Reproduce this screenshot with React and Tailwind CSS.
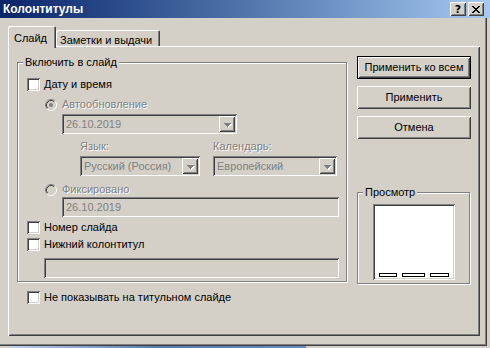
import React from 'react';

// Win2k classic 3D borders, painted as inset shadows so they take no layout room
const raised = 'shadow-[inset_1px_1px_0_#fff,inset_-1px_-1px_0_#404040,inset_2px_2px_0_#d4d0c8,inset_-2px_-2px_0_#808080]';
const defaultRaised = 'shadow-[inset_0_0_0_1px_#000,inset_2px_2px_0_#fff,inset_-2px_-2px_0_#404040,inset_3px_3px_0_#d4d0c8,inset_-3px_-3px_0_#808080]';
const sunken = 'shadow-[inset_1px_1px_0_#808080,inset_-1px_-1px_0_#fff,inset_2px_2px_0_#404040,inset_-2px_-2px_0_#d4d0c8]';
const disabledText = 'text-[#808080] [text-shadow:1px_1px_0_#fff]';

const Checkbox = ({ label, className = '' }) => (
    <div className={`flex items-center gap-[4px] h-[13px] ${className}`}>
        <div className={`w-[13px] h-[13px] bg-white shrink-0 ${sunken}`}></div>
        <span className="leading-[13px] whitespace-nowrap">{label}</span>
    </div>
);

const Radio = ({ label, checked, className = '' }) => (
    <div className={`flex items-center gap-[5px] h-[13px] ${className}`}>
        <svg width="12" height="12" viewBox="0 0 12 12" className="shrink-0">
            <circle cx="6" cy="6" r="5" fill="#d4d0c8" />
            <path d="M2.11 9.89 A5.5 5.5 0 0 1 9.89 2.11" fill="none" stroke="#808080" strokeWidth="1" />
            <path d="M9.89 2.11 A5.5 5.5 0 0 1 2.11 9.89" fill="none" stroke="#fff" strokeWidth="1" />
            <path d="M2.82 9.18 A4.5 4.5 0 0 1 9.18 2.82" fill="none" stroke="#404040" strokeWidth="1" />
            <path d="M9.18 2.82 A4.5 4.5 0 0 1 2.82 9.18" fill="none" stroke="#d4d0c8" strokeWidth="1" />
            {checked && <circle cx="6" cy="6" r="2" fill="#808080" />}
        </svg>
        <span className={`leading-[13px] whitespace-nowrap ${disabledText}`}>{label}</span>
    </div>
);

const DropArrow = () => (
    <div className={`w-[16px] h-[16px] shrink-0 bg-[#d4d0c8] ${raised}`}>
        <svg width="16" height="16" viewBox="0 0 16 16" shapeRendering="crispEdges">
            <g fill="#fff">
                <rect x="6" y="8" width="7" height="1" />
                <rect x="7" y="9" width="5" height="1" />
                <rect x="8" y="10" width="3" height="1" />
                <rect x="9" y="11" width="1" height="1" />
            </g>
            <g fill="#808080">
                <rect x="5" y="7" width="7" height="1" />
                <rect x="6" y="8" width="5" height="1" />
                <rect x="7" y="9" width="3" height="1" />
                <rect x="8" y="10" width="1" height="1" />
            </g>
        </svg>
    </div>
);

const Combo = ({ value, className = '' }) => (
    <div className={`h-[20px] flex items-center justify-between pl-[4px] pr-[2px] bg-[#d4d0c8] ${sunken} ${className}`}>
        <span className="text-[#808080] leading-[13px] whitespace-nowrap">{value}</span>
        <DropArrow />
    </div>
);

const Field = ({ value, className = '' }) => (
    <div className={`h-[20px] flex items-center pl-[4px] bg-[#d4d0c8] ${sunken} ${className}`}>
        <span className="text-[#808080] leading-[13px]">{value}</span>
    </div>
);

const Button = ({ children, isDefault }) => (
    <button className={`w-[114px] h-[23px] bg-[#d4d0c8] text-black leading-[13px] whitespace-nowrap ${isDefault ? defaultRaised : raised}`}>
        {children}
    </button>
);

const App = () => {
    return (
        <div className="w-[490px] h-[348px] bg-[#d4d0c8] overflow-hidden font-['Liberation_Sans',Arial,sans-serif] text-[11px] text-black select-none">
            {/* Title bar */}
            <div className="h-[18px] bg-linear-to-r from-[#0a246a] to-[#a6caf0] flex items-center justify-between pl-[3px] pr-[6px]">
                <span className="text-white font-bold text-[12px] leading-[14px]">Колонтитулы</span>
                <div className="flex gap-[2px]">
                    <div className={`w-[16px] h-[14px] bg-[#d4d0c8] flex items-center justify-center ${raised}`}>
                        <span className="font-bold text-[11px] leading-[11px] font-['DejaVu_Sans',sans-serif]">?</span>
                    </div>
                    <div className={`w-[16px] h-[14px] bg-[#d4d0c8] flex items-center justify-center ${raised}`}>
                        <svg width="8" height="7" viewBox="0 0 8 7" shapeRendering="crispEdges">
                            <path d="M0 0h2v1h-2zM6 0h2v1h-2zM1 1h2v1h-2zM5 1h2v1h-2zM2 2h4v1h-4zM3 3h2v1h-2zM2 4h4v1h-4zM1 5h2v1h-2zM5 5h2v1h-2zM0 6h2v1h-2zM6 6h2v1h-2z" fill="#000" />
                        </svg>
                    </div>
                </div>
            </div>

            {/* Window body */}
            <div className="w-[487px] h-[328px] pt-[8px] pl-[8px] shadow-[inset_-1px_-1px_0_#404040,inset_-2px_-2px_0_#808080]">
                {/* Tabs */}
                <div className="flex items-end h-[20px]">
                    <div className="relative z-10 h-[22px] mb-[-2px] w-[48px] pl-[6px] pt-[4px] bg-[#d4d0c8] rounded-t-[2px] shadow-[inset_1px_1px_0_#fff,inset_-1px_0_0_#404040,inset_-2px_0_0_#808080]">
                        <span className="leading-[13px]">Слайд</span>
                    </div>
                    <div className="h-[16px] w-[104px] pl-[4px] pt-[2px] rounded-t-[2px] shadow-[inset_1px_1px_0_#fff,inset_-1px_0_0_#404040,inset_-2px_0_0_#808080]">
                        <span className="leading-[13px] whitespace-nowrap">Заметки и выдачи</span>
                    </div>
                </div>

                {/* Tab page */}
                <div className={`w-[472px] h-[290px] flex pl-[9px] pt-[10px] ${raised}`}>
                    <div className="w-[330px] flex flex-col">
                        <fieldset className="border border-[#808080] shadow-[1px_1px_0_#fff,inset_1px_1px_0_#fff] pb-[3px]">
                            <legend className="ml-[5px] px-[2px] bg-[#d4d0c8] leading-[13px]">Включить в слайд</legend>
                            <Checkbox label="Дату и время" className="mt-[9px] ml-[9px]" />
                            <Radio label="Автообновление" checked className="mt-[7px] ml-[27px]" />
                            <Combo value="26.10.2019" className="mt-[3px] ml-[44px] w-[175px]" />
                            <div className="flex mt-[6px] ml-[62px] gap-[13px]">
                                <div className="w-[120px] flex flex-col">
                                    <span className={`leading-[13px] ${disabledText}`}>Язык:</span>
                                    <Combo value="Русский (Россия)" className="mt-[3px]" />
                                </div>
                                <div className="w-[124px] flex flex-col">
                                    <span className={`leading-[13px] ${disabledText}`}>Календарь:</span>
                                    <Combo value="Европейский" className="mt-[3px]" />
                                </div>
                            </div>
                            <Radio label="Фиксировано" className="mt-[7px] ml-[27px]" />
                            <Field value="26.10.2019" className="mt-[1px] ml-[44px] w-[277px]" />
                            <Checkbox label="Номер слайда" className="mt-[4px] ml-[9px]" />
                            <Checkbox label="Нижний колонтитул" className="mt-[4px] ml-[9px]" />
                            <Field value="" className="mt-[7px] ml-[26px] w-[295px]" />
                        </fieldset>
                        <Checkbox label="Не показывать на титульном слайде" className="mt-[9px] ml-[10px]" />
                    </div>

                    <div className="ml-[10px] w-[114px] flex flex-col gap-[7px]">
                        <Button isDefault>Применить ко всем</Button>
                        <Button>Применить</Button>
                        <Button>Отмена</Button>
                        <fieldset className="mt-[40px] w-[113px] border border-[#808080] shadow-[1px_1px_0_#fff,inset_1px_1px_0_#fff] pb-[3px]">
                            <legend className="ml-[5px] px-[2px] bg-[#d4d0c8] leading-[13px]">Просмотр</legend>
                            <div className={`mt-[5px] ml-[15px] w-[82px] h-[76px] bg-white flex items-end gap-[5px] px-[6px] pb-[3px] ${sunken}`}>
                                <div className="w-[18px] h-[4px] border border-black"></div>
                                <div className="w-[24px] h-[4px] border border-black"></div>
                                <div className="w-[19px] h-[4px] border border-black"></div>
                            </div>
                        </fieldset>
                    </div>
                </div>
            </div>

            {/* strip of the window behind */}
            <div className="ml-[10px] w-[296px] h-[2px] bg-linear-to-r from-[#c0d0e8] via-[#5a7bb0] to-[#6d8cc0]"></div>
        </div>
    );
};

export default App;
